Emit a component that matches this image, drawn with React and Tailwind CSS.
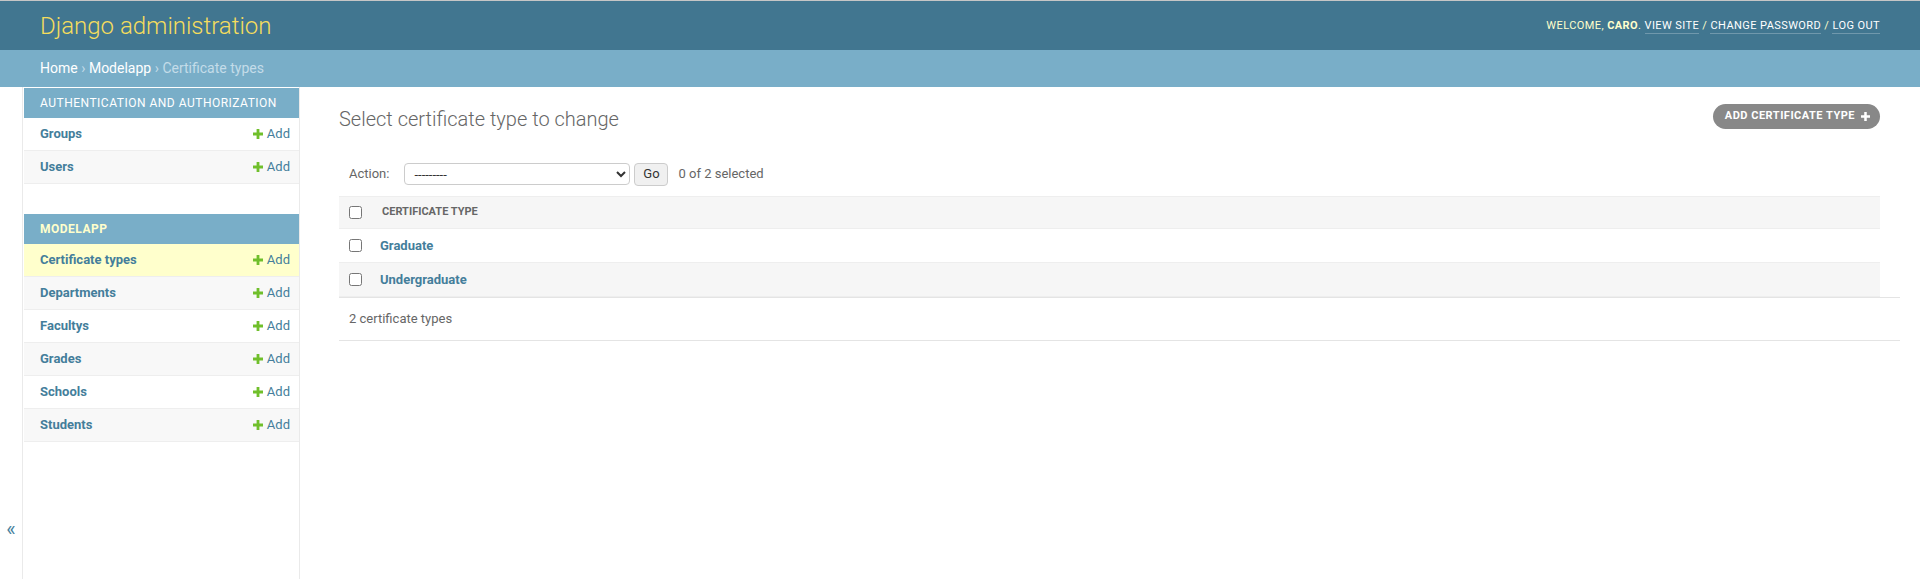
import React from 'react';

const apps = [
  {
    name: 'Authentication and Authorization',
    current: false,
    models: ['Groups', 'Users'],
  },
  {
    name: 'Modelapp',
    current: true,
    models: ['Certificate types', 'Departments', 'Facultys', 'Grades', 'Schools', 'Students'],
  },
];

const rows = ['Graduate', 'Undergraduate'];

// green/white bold plus used by Django's addlink icon
const PlusIcon = ({ color = '#70bf2b', size = 10 }) => (
  <svg width={size} height={size} viewBox="0 0 10 10" className="shrink-0">
    <path d="M3.6 0h2.8v3.6H10v2.8H6.4V10H3.6V6.4H0V3.6h3.6z" fill={color} />
  </svg>
);

const Checkbox = () => (
  <input type="checkbox" className="m-0 w-[13px] h-[13px]" readOnly />
);

export default function App() {
  return (
    <div className="min-h-[579px] bg-white font-['Roboto',sans-serif] text-[13px] text-[#333]">
      {/* Header */}
      <div className="border-t border-[#c6c6c6] h-[50px] bg-[#417690] flex items-center justify-between px-10">
        <div className="text-[24px] font-light text-[#f5dd5d] leading-none">Django administration</div>
        <div className="text-[11px] uppercase tracking-[0.42px] text-[#ffc] leading-none">
          Welcome, <strong className="font-bold text-[#ffc]">Caro</strong>.{' '}
          <a className="text-white border-b border-white/25 pb-[1px]">View site</a> /{' '}
          <a className="text-white border-b border-white/25 pb-[1px]">Change password</a> /{' '}
          <a className="text-white border-b border-white/25 pb-[1px]">Log out</a>
        </div>
      </div>

      {/* Breadcrumbs */}
      <div className="h-[37px] bg-[#79aec8] flex items-center px-10 text-[14px] text-[#c4dce8]">
        <a className="text-white">Home</a>
        <span className="mx-[3.5px]">›</span>
        <a className="text-white">Modelapp</a>
        <span className="mx-[3.5px]">›</span>
        <span>Certificate types</span>
      </div>

      <div className="flex h-[492px]">
        {/* Sidebar toggle */}
        <div className="w-[23px] border-r border-[#eaeaea] flex flex-col justify-end items-center pb-[40px]">
          <span className="text-[20px] leading-5 text-[#447e9b]">«</span>
        </div>

        {/* Sidebar */}
        <div className="w-[277px] pl-px border-r border-[#eaeaea] pt-px">
          {apps.map((app) => (
            <div key={app.name} className="mb-[30px]">
              <div
                className={`h-[30px] bg-[#79aec8] flex items-center pl-4 text-[12px] uppercase tracking-[0.5px] ${
                  app.current ? 'text-[#ffc] font-bold' : 'text-white'
                }`}
              >
                {app.name}
              </div>
              {app.models.map((m, i) => (
                <div
                  key={m}
                  className={`h-[33px] border-b border-[#eee] flex items-center justify-between pl-4 pr-[9px] ${
                    app.current && i === 0 ? 'bg-[#ffc]' : i % 2 === 1 ? 'bg-[#f8f8f8]' : 'bg-white'
                  }`}
                >
                  <a className="font-bold text-[#447e9b]">{m}</a>
                  <a className="flex items-center gap-[4px] text-[#447e9b]">
                    <PlusIcon />
                    Add
                  </a>
                </div>
              ))}
            </div>
          ))}
        </div>

        {/* Content */}
        <div className="flex-1 pl-[39px] pr-5 pt-[17px]">
          <div className="flex justify-between items-start pr-5">
            <h1 className="mt-[3px] text-[20px] leading-6 font-light text-[#666]">
              Select certificate type to change
            </h1>
            <a className="h-[25px] rounded-full bg-[#888] flex items-center gap-[6px] pl-[12px] pr-[10px] text-[11px] font-bold uppercase tracking-[0.5px] text-white">
              Add certificate type
              <PlusIcon color="#fff" size={9} />
            </a>
          </div>

          {/* Actions */}
          <div className="flex items-center h-[43px] mt-[22px] pb-[1px] pl-[10px] pr-5 text-[#666]">
            <span>Action:</span>
            <select className="ml-[15px] w-[226px] h-[22px] border border-[#ccc] rounded-[4px] bg-white text-[13px] text-[#333] pl-[5px]">
              <option>---------</option>
            </select>
            <button className="ml-[4px] h-[23px] w-[34px] border border-[#ccc] rounded-[4px] bg-[#f0f0f0] text-[#333] text-[13px]">
              Go
            </button>
            <span className="ml-[10px]">0 of 2 selected</span>
          </div>

          {/* Results table */}
          <div className="mr-5">
            <div className="h-[33px] border-t border-b border-[#eee] bg-[#f6f6f6] flex items-center pl-[10px]">
              <Checkbox />
              <span className="ml-[20px] text-[11px] font-bold uppercase text-[#666]">Certificate type</span>
            </div>
            {rows.map((r, i) => (
              <div
                key={r}
                className={`h-[34px] border-b border-[#eee] flex items-center pl-[10px] ${
                  i % 2 === 1 ? 'bg-[#f6f6f6]' : 'bg-white'
                }`}
              >
                <Checkbox />
                <a className="ml-[18px] font-bold text-[#447e9b]">{r}</a>
              </div>
            ))}
          </div>

          {/* Paginator */}
          <div className="h-[44px] border-t border-b border-[#e4e4e4] flex items-center pl-[10px] text-[#666]">
            2 certificate types
          </div>
        </div>
      </div>
    </div>
  );
}
